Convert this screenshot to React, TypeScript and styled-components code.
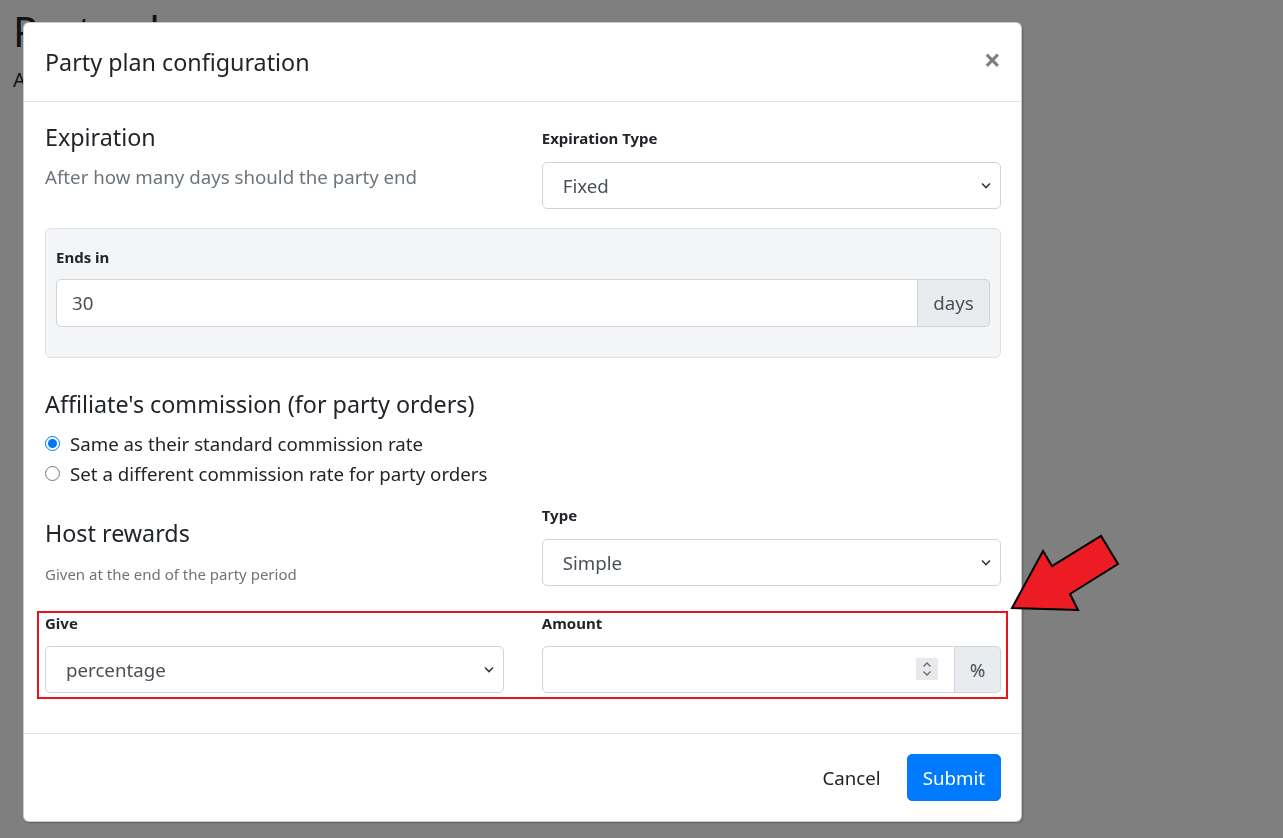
import React from "react";
import styled, { createGlobalStyle } from "styled-components";

const GlobalStyle = createGlobalStyle`
  html, body { margin: 0; padding: 0; background: #fff; }
  body {
    font-family: "Noto Sans", "Open Sans", Arial, sans-serif;
    color: #212529;
  }
  * { box-sizing: border-box; }
`;

const Page = styled.div`
  padding: 0 13px;
  height: 838px;
  overflow: hidden;
`;

const PageTitle = styled.h1`
  margin: 7px 0 0;
  font-size: 41px;
  line-height: 48px;
  font-weight: 400;
  color: #212529;
`;

const PageLead = styled.p`
  margin: 10px 0 0;
  font-size: 20px;
  line-height: 30px;
`;

const Backdrop = styled.div`
  position: fixed;
  inset: 0;
  background: rgba(0, 0, 0, 0.5);
`;

const Modal = styled.div`
  position: absolute;
  top: 22px;
  left: 23px;
  width: 999px;
  background: #fff;
  border: 1px solid rgba(0, 0, 0, 0.2);
  border-radius: 6px;
  box-shadow: 1px 1px 2px rgba(0, 0, 0, 0.25);
`;

const Header = styled.div`
  display: flex;
  align-items: center;
  justify-content: space-between;
  padding: 21px 20px 19px 21px;
  border-bottom: 1px solid #dee2e6;
`;

const Title = styled.h5`
  margin: 0;
  font-size: 23.3px;
  line-height: 37.5px;
  font-weight: 400;
`;

const Close = styled.button`
  border: 0;
  background: none;
  padding: 0;
  margin-top: -5px;
  font-family: "Noto Sans", Arial, sans-serif;
  font-size: 30px;
  font-weight: 700;
  line-height: 1;
  color: #000;
  opacity: 0.5;
`;

const Body = styled.div`
  padding: 20px 20px 20px 21px;
`;

const Row = styled.div<{ $mb?: number; $mt?: number }>`
  display: grid;
  grid-template-columns: 1fr 1fr;
  column-gap: 37.5px;
  margin-top: ${(p) => p.$mt ?? 0}px;
  margin-bottom: ${(p) => p.$mb ?? 0}px;
`;

const Col = styled.div<{ $pt?: number }>`
  padding-top: ${(p) => p.$pt ?? 0}px;
  min-width: 0;
`;

const Heading = styled.h4<{ $mb?: number }>`
  margin: 0 0 ${(p) => p.$mb ?? 10}px;
  font-size: 23.3px;
  line-height: 30px;
  font-weight: 400;
  color: #212529;
`;

const Muted = styled.p`
  margin: 0;
  font-size: 18.7px;
  line-height: 30px;
  color: #6c757d;
`;

const Small = styled.p`
  margin: 14px 0 0;
  font-size: 15px;
  line-height: 24px;
  color: #6c757d;
`;

const Label = styled.label<{ $mb?: number }>`
  display: block;
  font-size: 15px;
  line-height: 24px;
  font-weight: 700;
  color: #212529;
  margin-bottom: ${(p) => p.$mb ?? 11}px;
`;

const SelectWrap = styled.div`
  display: grid;
  align-items: center;
`;

const Select = styled.select`
  grid-area: 1 / 1;
  appearance: none;
  width: 100%;
  height: 47px;
  padding: 0 40px 0 20px;
  font-family: inherit;
  font-size: 18.7px;
  color: #495057;
  background: #fff;
  border: 1px solid #ced4da;
  border-radius: 5px;
  outline: none;
`;

const Chevron = styled.svg`
  grid-area: 1 / 1;
  justify-self: end;
  margin-right: 8px;
  pointer-events: none;
`;

const Panel = styled.div`
  background: #f4f5f7;
  border: 1px solid #dfe2e6;
  border-radius: 6px;
  padding: 16px 10px 10px;
  margin-bottom: 31px;
`;

const InputGroup = styled.div<{ $mb?: number; $h?: number }>`
  display: flex;
  height: ${(p) => p.$h ?? 47}px;
  margin-bottom: ${(p) => p.$mb ?? 0}px;
`;

const TextInput = styled.input`
  flex: 1;
  min-width: 0;
  height: 100%;
  padding: 0 15px;
  font-family: inherit;
  font-size: 18.7px;
  color: #495057;
  background: #fff;
  border: 1px solid #ced4da;
  border-radius: 5px 0 0 5px;
  outline: none;
`;

const InputShell = styled.div`
  flex: 1;
  display: flex;
  align-items: center;
  background: #fff;
  border: 1px solid #ced4da;
  border-radius: 5px 0 0 5px;
`;

const BareInput = styled.input`
  flex: 1;
  min-width: 0;
  height: 100%;
  padding: 0 15px;
  border: 0;
  background: transparent;
  font-family: inherit;
  font-size: 18.7px;
  color: #495057;
  outline: none;
`;

const Spinner = styled.span`
  display: flex;
  align-items: center;
  justify-content: center;
  width: 22px;
  height: 22px;
  margin-right: 16px;
  background: #e9e9ed;
  border-radius: 2px;
`;

const Addon = styled.span<{ $w?: number }>`
  display: flex;
  align-items: center;
  justify-content: center;
  width: ${(p) => p.$w ?? 72}px;
  height: 100%;
  background: #e9ecef;
  border: 1px solid #ced4da;
  border-left: 0;
  border-radius: 0 5px 5px 0;
  font-size: 18.7px;
  color: #495057;
`;

const RadioRow = styled.label`
  display: flex;
  align-items: center;
  gap: 10px;
  font-size: 18.7px;
  line-height: 30px;
  color: #212529;
`;

const Radio = styled.input`
  width: 15px;
  height: 15px;
  margin: 0;
`;

const Highlight = styled.div`
  position: relative;
  &::after {
    content: "";
    position: absolute;
    top: 0;
    left: -8px;
    right: -7px;
    bottom: -6px;
    border: 2px solid #e8141c;
    pointer-events: none;
  }
`;

const Footer = styled.div`
  display: flex;
  justify-content: flex-end;
  align-items: center;
  gap: 10px;
  padding: 20px;
  border-top: 1px solid #dee2e6;
`;

const Button = styled.button<{ $primary?: boolean }>`
  height: 47px;
  padding: 0 15px;
  font-family: inherit;
  font-size: 18.7px;
  border-radius: 5px;
  border: 1px solid ${(p) => (p.$primary ? "#007bff" : "transparent")};
  background: ${(p) => (p.$primary ? "#007bff" : "transparent")};
  color: ${(p) => (p.$primary ? "#fff" : "#212529")};
`;

const Arrow = styled.svg`
  position: absolute;
  left: 1000px;
  top: 525px;
`;

const ChevronDown = () => (
  <Chevron width="14" height="10" viewBox="0 0 14 10">
    <path d="M3 3.5 L7 7.5 L11 3.5" fill="none" stroke="#343a40" strokeWidth="1.6" />
  </Chevron>
);

function SelectField({ value }: { value: string }) {
  return (
    <SelectWrap>
      <Select defaultValue={value}>
        <option>{value}</option>
      </Select>
      <ChevronDown />
    </SelectWrap>
  );
}

export default function App() {
  return (
    <>
      <GlobalStyle />
      <Page>
        <PageTitle>Party plans</PageTitle>
        <PageLead>Add and manage the party plans of your store</PageLead>
      </Page>
      <Backdrop />
      <Modal>
        <Header>
          <Title>Party plan configuration</Title>
          <Close aria-label="Close">×</Close>
        </Header>
        <Body>
          <Row $mb={19}>
            <Col>
              <Heading>Expiration</Heading>
              <Muted>After how many days should the party end</Muted>
            </Col>
            <Col $pt={4}>
              <Label $mb={12}>Expiration Type</Label>
              <SelectField value="Fixed" />
            </Col>
          </Row>

          <Panel>
            <Label $mb={10}>Ends in</Label>
            <InputGroup $mb={20} $h={48}>
              <TextInput defaultValue="30" />
              <Addon $w={72}>days</Addon>
            </InputGroup>
          </Panel>

          <Heading>Affiliate's commission (for party orders)</Heading>
          <RadioRow>
            <Radio type="radio" name="commission" defaultChecked />
            Same as their standard commission rate
          </RadioRow>
          <RadioRow>
            <Radio type="radio" name="commission" />
            Set a different commission rate for party orders
          </RadioRow>

          <Row $mt={14} $mb={25}>
            <Col $pt={15}>
              <Heading $mb={0}>Host rewards</Heading>
              <Small>Given at the end of the party period</Small>
            </Col>
            <Col>
              <Label $mb={12}>Type</Label>
              <SelectField value="Simple" />
            </Col>
          </Row>

          <Highlight>
            <Row $mb={20}>
              <Col>
                <Label>Give</Label>
                <SelectField value="percentage" />
              </Col>
              <Col>
                <Label>Amount</Label>
                <InputGroup>
                  <InputShell>
                    <BareInput />
                    <Spinner>
                      <svg width="12" height="18" viewBox="0 0 12 18">
                        <path d="M2.5 6.5 L6 3 L9.5 6.5" fill="none" stroke="#6b6b6b" strokeWidth="1.3" />
                        <path d="M2.5 11.5 L6 15 L9.5 11.5" fill="none" stroke="#6b6b6b" strokeWidth="1.3" />
                      </svg>
                    </Spinner>
                  </InputShell>
                  <Addon $w={46}>%</Addon>
                </InputGroup>
              </Col>
            </Row>
          </Highlight>
        </Body>
        <Footer>
          <Button>Cancel</Button>
          <Button $primary>Submit</Button>
        </Footer>
      </Modal>
      <Arrow width="130" height="95" viewBox="1000 525 130 95">
        <polygon
          points="1012,608 1043,551 1052,566 1101,536 1118,564 1070,594 1078,610"
          fill="#ed1c24"
          stroke="#000"
          strokeWidth="2"
          strokeLinejoin="miter"
        />
      </Arrow>
    </>
  );
}
